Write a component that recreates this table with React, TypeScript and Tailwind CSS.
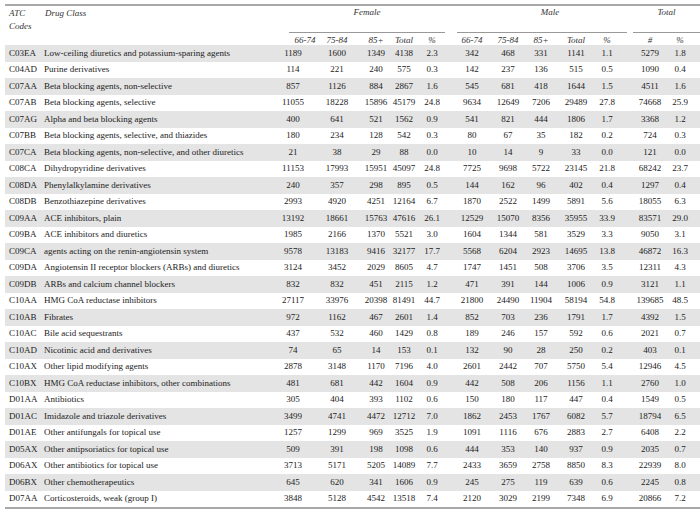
import React from 'react';

type Row = [string, string, ...string[]];

const rows: Row[] = [
  ['C03EA', 'Low-ceiling diuretics and potassium-sparing agents', '1189', '1600', '1349', '4138', '2.3', '342', '468', '331', '1141', '1.1', '5279', '1.8'],
  ['C04AD', 'Purine derivatives', '114', '221', '240', '575', '0.3', '142', '237', '136', '515', '0.5', '1090', '0.4'],
  ['C07AA', 'Beta blocking agents, non-selective', '857', '1126', '884', '2867', '1.6', '545', '681', '418', '1644', '1.5', '4511', '1.6'],
  ['C07AB', 'Beta blocking agents, selective', '11055', '18228', '15896', '45179', '24.8', '9634', '12649', '7206', '29489', '27.8', '74668', '25.9'],
  ['C07AG', 'Alpha and beta blocking agents', '400', '641', '521', '1562', '0.9', '541', '821', '444', '1806', '1.7', '3368', '1.2'],
  ['C07BB', 'Beta blocking agents, selective, and thiazides', '180', '234', '128', '542', '0.3', '80', '67', '35', '182', '0.2', '724', '0.3'],
  ['C07CA', 'Beta blocking agents, non-selective, and other diuretics', '21', '38', '29', '88', '0.0', '10', '14', '9', '33', '0.0', '121', '0.0'],
  ['C08CA', 'Dihydropyridine derivatives', '11153', '17993', '15951', '45097', '24.8', '7725', '9698', '5722', '23145', '21.8', '68242', '23.7'],
  ['C08DA', 'Phenylalkylamine derivatives', '240', '357', '298', '895', '0.5', '144', '162', '96', '402', '0.4', '1297', '0.4'],
  ['C08DB', 'Benzothiazepine derivatives', '2993', '4920', '4251', '12164', '6.7', '1870', '2522', '1499', '5891', '5.6', '18055', '6.3'],
  ['C09AA', 'ACE inhibitors, plain', '13192', '18661', '15763', '47616', '26.1', '12529', '15070', '8356', '35955', '33.9', '83571', '29.0'],
  ['C09BA', 'ACE inhibitors and diuretics', '1985', '2166', '1370', '5521', '3.0', '1604', '1344', '581', '3529', '3.3', '9050', '3.1'],
  ['C09CA', 'agents acting on the renin-angiotensin system', '9578', '13183', '9416', '32177', '17.7', '5568', '6204', '2923', '14695', '13.8', '46872', '16.3'],
  ['C09DA', 'Angiotensin II receptor blockers (ARBs) and diuretics', '3124', '3452', '2029', '8605', '4.7', '1747', '1451', '508', '3706', '3.5', '12311', '4.3'],
  ['C09DB', 'ARBs and calcium channel blockers', '832', '832', '451', '2115', '1.2', '471', '391', '144', '1006', '0.9', '3121', '1.1'],
  ['C10AA', 'HMG CoA reductase inhibitors', '27117', '33976', '20398', '81491', '44.7', '21800', '24490', '11904', '58194', '54.8', '139685', '48.5'],
  ['C10AB', 'Fibrates', '972', '1162', '467', '2601', '1.4', '852', '703', '236', '1791', '1.7', '4392', '1.5'],
  ['C10AC', 'Bile acid sequestrants', '437', '532', '460', '1429', '0.8', '189', '246', '157', '592', '0.6', '2021', '0.7'],
  ['C10AD', 'Nicotinic acid and derivatives', '74', '65', '14', '153', '0.1', '132', '90', '28', '250', '0.2', '403', '0.1'],
  ['C10AX', 'Other lipid modifying agents', '2878', '3148', '1170', '7196', '4.0', '2601', '2442', '707', '5750', '5.4', '12946', '4.5'],
  ['C10BX', 'HMG CoA reductase inhibitors, other combinations', '481', '681', '442', '1604', '0.9', '442', '508', '206', '1156', '1.1', '2760', '1.0'],
  ['D01AA', 'Antibiotics', '305', '404', '393', '1102', '0.6', '150', '180', '117', '447', '0.4', '1549', '0.5'],
  ['D01AC', 'Imidazole and triazole derivatives', '3499', '4741', '4472', '12712', '7.0', '1862', '2453', '1767', '6082', '5.7', '18794', '6.5'],
  ['D01AE', 'Other antifungals for topical use', '1257', '1299', '969', '3525', '1.9', '1091', '1116', '676', '2883', '2.7', '6408', '2.2'],
  ['D05AX', 'Other antipsoriatics for topical use', '509', '391', '198', '1098', '0.6', '444', '353', '140', '937', '0.9', '2035', '0.7'],
  ['D06AX', 'Other antibiotics for topical use', '3713', '5171', '5205', '14089', '7.7', '2433', '3659', '2758', '8850', '8.3', '22939', '8.0'],
  ['D06BX', 'Other chemotherapeutics', '645', '620', '341', '1606', '0.9', '245', '275', '119', '639', '0.6', '2245', '0.8'],
  ['D07AA', 'Corticosteroids, weak (group I)', '3848', '5128', '4542', '13518', '7.4', '2120', '3029', '2199', '7348', '6.9', '20866', '7.2'],
];

// shared column template for header and body
const cols =
  'grid grid-cols-[38px_232px_36px_52px_26px_30px_26px_12px_30px_42px_24px_46px_16px_18px_34px_26px_7px]';

const Num = ({ v }: { v: string }) => (
  <div className="flex items-center justify-center whitespace-nowrap">{v}</div>
);

const DataRow = ({ row, shaded }: { row: Row; shaded: boolean }) => {
  const [code, name, ...n] = row;
  return (
    <div className={`${cols} h-[16.5px] ${shaded ? 'bg-[#e4e4e4]' : 'bg-white'}`}>
      <div className="flex items-center pl-[4px] whitespace-nowrap">{code}</div>
      <div className="flex items-center pl-[1px] whitespace-nowrap">{name}</div>
      {n.slice(0, 5).map((v, i) => (
        <Num key={`f${i}`} v={v} />
      ))}
      <div />
      {n.slice(5, 10).map((v, i) => (
        <Num key={`m${i}`} v={v} />
      ))}
      <div />
      {n.slice(10, 12).map((v, i) => (
        <Num key={`t${i}`} v={v} />
      ))}
      <div />
    </div>
  );
};

export default function App() {
  return (
    <div className="w-[700px] h-[514px] bg-white pt-[4px] pl-[5px] text-[9px] leading-none text-[#222] font-['Liberation_Serif',serif]">
      <div className="border-t-2 border-b-2 border-[#a8a8a8]">
        {/* Header */}
        <div className={`${cols} grid-rows-[27px_12px] italic text-[#333] whitespace-nowrap`}>
          <div className="row-span-2 pl-[4px] pt-[1px] leading-[12.5px]">
            ATC
            <br />
            Codes
          </div>
          <div className="row-span-2 pl-[2px] pt-[1px] leading-[12.5px]">Drug Class</div>
          <div className="col-start-3 col-span-5 ml-[14px] border-b border-[#999] flex justify-center pt-[2px]">
            Female
          </div>
          <div className="col-start-9 col-span-6 mr-[6px] border-b border-[#999] flex justify-center pl-[16px] pt-[2px]">
            Male
          </div>
          <div className="col-start-15 col-span-3 border-b border-[#999] flex justify-center pt-[2px]">
            Total
          </div>
          <div className="row-start-2 col-start-3 flex justify-center items-center pl-[24px] pt-[3px]">66-74</div>
          <div className="row-start-2 col-start-4 flex justify-center items-center pt-[3px]">75-84</div>
          <div className="row-start-2 col-start-5 flex justify-center items-center pt-[3px]">85+</div>
          <div className="row-start-2 col-start-6 flex justify-center items-center pt-[3px]">Total</div>
          <div className="row-start-2 col-start-7 flex justify-center items-center pt-[3px]">%</div>
          <div className="row-start-2 col-start-9 flex justify-center items-center pt-[3px]">66-74</div>
          <div className="row-start-2 col-start-10 flex justify-center items-center pt-[3px]">75-84</div>
          <div className="row-start-2 col-start-11 flex justify-center items-center pt-[3px]">85+</div>
          <div className="row-start-2 col-start-12 flex justify-center items-center pt-[3px]">Total</div>
          <div className="row-start-2 col-start-13 flex justify-center items-center pt-[3px]">%</div>
          <div className="row-start-2 col-start-15 flex justify-center items-center pt-[3px]">#</div>
          <div className="row-start-2 col-start-16 flex justify-center items-center pt-[3px]">%</div>
        </div>

        {/* Body */}
        {rows.map((r, i) => (
          <DataRow key={r[0]} row={r} shaded={i % 2 === 0} />
        ))}
      </div>
    </div>
  );
}
